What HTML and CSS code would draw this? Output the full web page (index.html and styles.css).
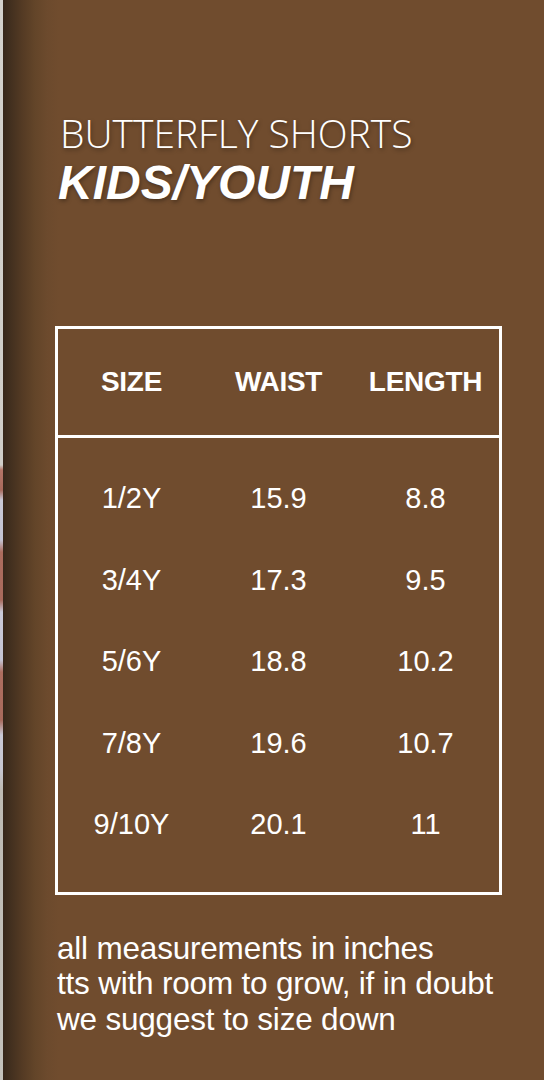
FILE: index.html
```html
<!DOCTYPE html>
<html>
<head>
<meta charset="utf-8">
<link rel="stylesheet" href="styles.css">
</head>
<body>
<div class="page">
  <div class="edge"></div>
  <div class="panel">
    <div class="title">
      <div class="title-top">BUTTERFLY SHORTS</div>
      <div class="title-main">KIDS/YOUTH</div>
    </div>
    <div class="chart">
      <div class="chart-head">
        <div class="cell">SIZE</div>
        <div class="cell">WAIST</div>
        <div class="cell">LENGTH</div>
      </div>
      <div class="chart-body">
        <div class="row"><div class="cell">1/2Y</div><div class="cell">15.9</div><div class="cell">8.8</div></div>
        <div class="row"><div class="cell">3/4Y</div><div class="cell">17.3</div><div class="cell">9.5</div></div>
        <div class="row"><div class="cell">5/6Y</div><div class="cell">18.8</div><div class="cell">10.2</div></div>
        <div class="row"><div class="cell">7/8Y</div><div class="cell">19.6</div><div class="cell">10.7</div></div>
        <div class="row"><div class="cell">9/10Y</div><div class="cell">20.1</div><div class="cell">11</div></div>
      </div>
    </div>
    <div class="note">
      <div>all measurements in inches</div>
      <div>tts with room to grow, if in doubt</div>
      <div>we suggest to size down</div>
    </div>
  </div>
</div>
</body>
</html>
```
FILE: styles.css
```css
html, body {
  margin: 0;
  padding: 0;
}
body {
  width: 544px;
  height: 1080px;
  overflow: hidden;
  background: #704c2e;
  font-family: "Liberation Sans", Arial, sans-serif;
  color: #ffffff;
}
.page {
  display: flex;
  height: 1080px;
}
.edge {
  width: 3px;
  flex: none;
  background: linear-gradient(to bottom,
    #d3d1cc 0, #cfcdc8 465px,
    #b57567 470px, #a86a5c 490px, #c9c9d6 500px, #c3c3d2 540px,
    #ac6c5e 552px, #a86a5c 600px, #cacad8 612px, #c4c4d3 660px,
    #ae6e60 672px, #a86a5c 720px, #c9c9d6 735px, #c6c6d0 770px,
    #bdbab3 790px, #c4c2bc 1080px);
}
.panel {
  flex: 1;
  padding-left: 52px;
  background: linear-gradient(to right, #37271a 0, #43301f 8px, #553b24 20px, #634529 32px, #6c4a2d 44px, #704c2e 56px);
}
.title {
  padding-top: 110px;
  padding-left: 3px;
  text-shadow: 1px 2px 4px rgba(0, 0, 0, 0.35);
}
.title-top {
  font-family: "Open Sans", "Liberation Sans", sans-serif;
  font-weight: 300;
  font-size: 39px;
  line-height: 46px;
  padding-left: 2px;
}
.title-main {
  font-weight: 700;
  font-style: italic;
  font-size: 48px;
  line-height: 54px;
}
.chart {
  margin-top: 116px;
  width: 441px;
  border: 3px solid #ffffff;
}
.chart-head {
  display: grid;
  grid-template-columns: 1fr 1fr 1fr;
  align-items: center;
  height: 106px;
  border-bottom: 3px solid #ffffff;
  font-weight: 700;
  font-size: 28px;
  letter-spacing: -0.3px;
}
.chart-body {
  padding: 20px 0 26px;
}
.row {
  display: grid;
  grid-template-columns: 1fr 1fr 1fr;
  align-items: center;
  height: 81.5px;
  font-size: 29px;
}
.cell {
  text-align: center;
}
.note {
  margin-top: 36px;
  padding-left: 2px;
  font-size: 31.5px;
  line-height: 35.5px;
  letter-spacing: -0.2px;
}
```
